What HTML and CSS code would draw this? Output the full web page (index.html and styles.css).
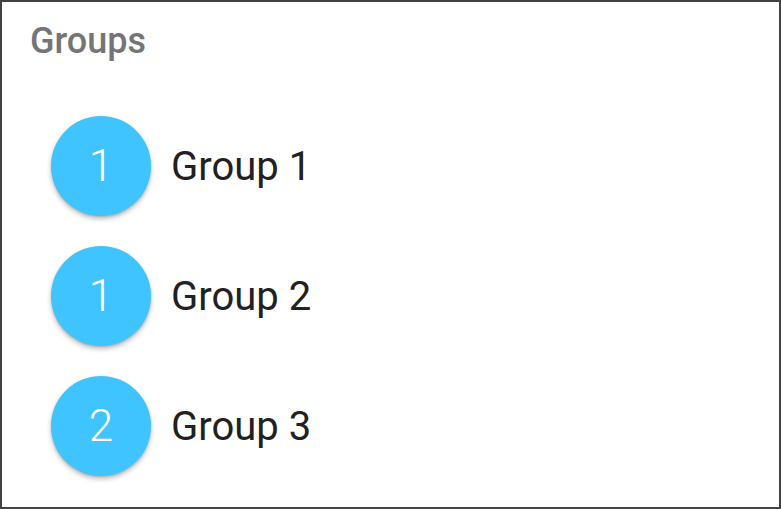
FILE: index.html
```html
<!DOCTYPE html>
<html>
<head>
<meta charset="utf-8">
<link rel="stylesheet" href="styles.css">
</head>
<body>
<div class="panel">
  <div class="title">Groups</div>
  <ul class="list">
    <li class="item"><span class="badge">1</span><span class="name">Group 1</span></li>
    <li class="item"><span class="badge">1</span><span class="name">Group 2</span></li>
    <li class="item"><span class="badge">2</span><span class="name">Group 3</span></li>
  </ul>
</div>
</body>
</html>
```
FILE: styles.css
```css
html, body {
  margin: 0;
  padding: 0;
  background: #ffffff;
}
.panel {
  box-sizing: border-box;
  width: 781px;
  height: 509px;
  border: 2px solid #424242;
  font-family: Roboto, "Noto Sans", sans-serif;
  overflow: hidden;
}
.title {
  padding: 19px 0 0 28px;
  font-size: 36px;
  font-weight: 500;
  color: #757575;
  line-height: 40px;
}
.list {
  list-style: none;
  margin: 0;
  padding: 55px 0 0 49px;
  display: flex;
  flex-direction: column;
  gap: 30px;
}
.item {
  display: flex;
  align-items: center;
  gap: 20px;
  height: 100px;
}
.badge {
  width: 100px;
  height: 100px;
  border-radius: 50%;
  background: #40c4ff;
  color: #ffffff;
  display: flex;
  align-items: center;
  justify-content: center;
  font-size: 44px;
  font-weight: 300;
  box-shadow: 0 3px 5px rgba(0,0,0,0.25), 0 1px 2px rgba(0,0,0,0.12);
}
.name {
  font-size: 40px;
  color: #212121;
}
```
